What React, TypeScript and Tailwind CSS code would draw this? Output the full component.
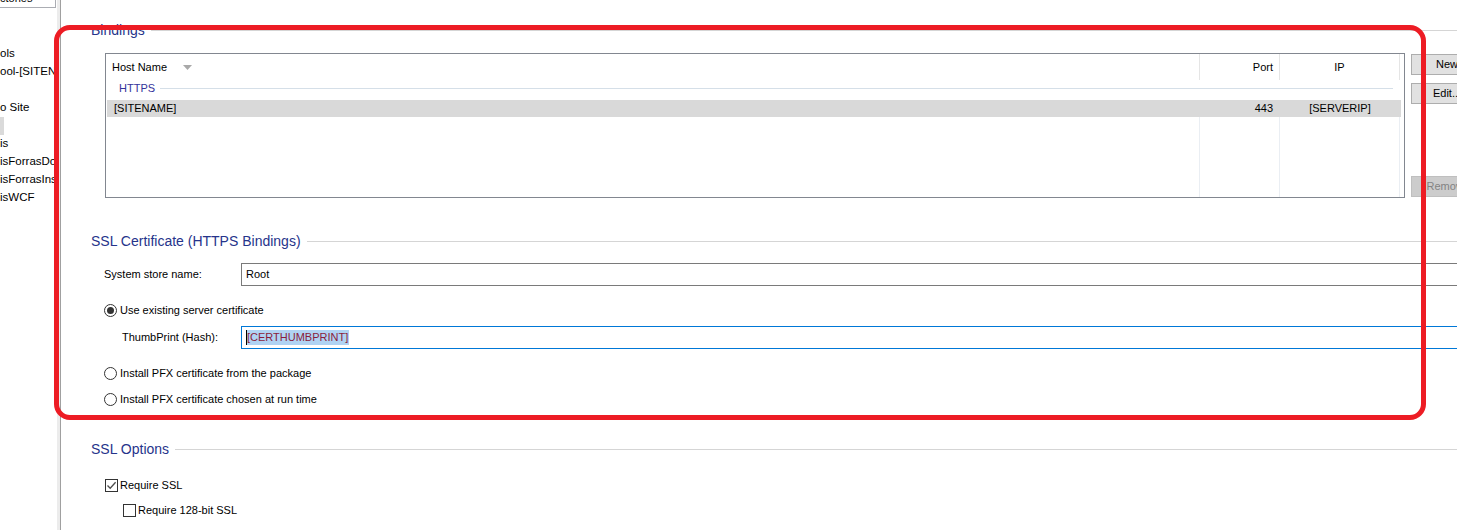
import React from "react";

const FONT = { fontFamily: '"Liberation Sans", Arial, sans-serif' };

function Heading({ text }: { text: string }) {
  return (
    <div className="flex items-center h-[18px] pl-[30px]">
      <span className="text-[14px] leading-[18px] text-[#26348b] whitespace-nowrap">{text}</span>
      <div className="flex-1 h-px bg-[#d5d5d5] ml-[6px]" />
    </div>
  );
}

function Radio({ checked, label }: { checked?: boolean; label: string }) {
  return (
    <div className="flex items-center h-[16px] ml-[43px]">
      <div className="w-[13px] h-[13px] rounded-full border border-[#333333] bg-white flex items-center justify-center shrink-0">
        {checked && <div className="w-[7px] h-[7px] rounded-full bg-[#333333]" />}
      </div>
      <span className="ml-[3px] text-[11px] whitespace-nowrap">{label}</span>
    </div>
  );
}

function Check({ checked, label, indent }: { checked?: boolean; label: string; indent: string }) {
  return (
    <div className={`flex items-center h-[16px] ${indent}`}>
      <div className="w-[13px] h-[13px] border border-[#333333] bg-white flex items-center justify-center shrink-0">
        {checked && (
          <svg width="11" height="11" viewBox="0 0 11 11">
            <path d="M1.5 5.5 L4.2 8.3 L9.6 2.2" fill="none" stroke="#4d4d4d" strokeWidth="1.3" />
          </svg>
        )}
      </div>
      <span className="ml-[2px] text-[11px] whitespace-nowrap">{label}</span>
    </div>
  );
}

export default function App() {
  const tree = ["ols", "ool-[SITENAME]", "", "o Site", "", "is", "isForrasDocs", "isForrasInstall", "isWCF"];
  return (
    <div className="w-[1457px] h-[530px] bg-white relative overflow-hidden flex text-black" style={FONT}>
      {/* Sidebar */}
      <div className="w-[57px] shrink-0 overflow-hidden flex flex-col">
        <div className="w-[56px] h-[8px] border-r border-b border-[#abadb3] overflow-hidden">
          <div className="text-[11px] leading-[14px] -mt-[9px] whitespace-nowrap">ctones</div>
        </div>
        <div className="mt-[37px] flex flex-col">
          {tree.map((t, i) => (
            <div key={i} className="h-[18px] flex items-center text-[11.5px] whitespace-nowrap relative">
              {i === 4 ? <div className="w-[4px] h-[18px] bg-[#dadada]" /> : <span>{t}</span>}
            </div>
          ))}
        </div>
      </div>
      <div className="w-[3px] shrink-0 bg-[#ececec]" />
      <div className="w-px shrink-0 bg-[#a0a0a0]" />

      {/* Main */}
      <div className="flex-1 min-w-0 flex flex-col pt-[21px]">
        <Heading text="Bindings" />
        <div className="flex mt-[14px] ml-[44px]">
          <div className="w-[1300px] h-[145px] shrink-0 border border-[#828790] flex flex-col text-[11px]">
            <div className="flex h-[26px]">
              <div className="w-[1094px] border-r border-[#e5e5e5] flex items-center pl-[6px]">
                <span>Host Name</span>
                <svg className="ml-[16px]" width="9" height="5" viewBox="0 0 9 5">
                  <path d="M0 0 L9 0 L4.5 5 Z" fill="#a9a9a9" />
                </svg>
              </div>
              <div className="w-[80px] border-r border-[#e5e5e5] flex items-center justify-end pr-[6px]">Port</div>
              <div className="w-[120px] border-r border-[#e5e5e5] flex items-center justify-center">IP</div>
              <div className="flex-1" />
            </div>
            <div className="h-[20px] flex items-start">
              <div className="h-[16px] flex items-center w-full pl-[13px] pr-[11px]">
                <span className="text-[#33339b] text-[11px]">HTTPS</span>
                <div className="flex-1 h-px bg-[#d5dfe8] ml-[5px]" />
              </div>
            </div>
            <div className="flex h-[17px]">
              <div className="w-[1294px] ml-px bg-[#d9d9d9] flex">
                <div className="w-[1093px] flex items-center pl-[7px]">[SITENAME]</div>
                <div className="w-[80px] flex items-center justify-end pr-[7px]">443</div>
                <div className="w-[120px] flex items-center justify-center">[SERVERIP]</div>
              </div>
            </div>
            <div className="flex flex-1">
              <div className="w-[1094px] border-r border-[#eaeef3]" />
              <div className="w-[80px] border-r border-[#eaeef3]" />
              <div className="w-[120px] border-r border-[#eaeef3]" />
              <div className="flex-1" />
            </div>
          </div>
          <div className="w-[72px] shrink-0 ml-[6px] h-[145px] flex flex-col py-px text-[11px]">
            <div className="h-[21px] bg-[#e1e1e1] border border-[#adadad] flex items-center justify-center">New</div>
            <div className="h-[21px] mt-[8px] bg-[#e1e1e1] border border-[#adadad] flex items-center justify-center">Edit...</div>
            <div className="flex-1" />
            <div className="h-[21px] bg-[#cccccc] border border-[#bfbfbf] text-[#838383] flex items-center justify-center">Remove</div>
          </div>
        </div>

        <div className="mt-[34px]">
          <Heading text="SSL Certificate (HTTPS Bindings)" />
        </div>
        <div className="flex items-center mt-[13px] ml-[43px] text-[11px]">
          <span className="w-[137px] shrink-0 whitespace-nowrap">System store name:</span>
          <div className="w-[1240px] shrink-0 h-[23px] border border-[#7a7a7a] flex items-center pl-[4px] pb-[1px]">Root</div>
        </div>
        <div className="mt-[16px]">
          <Radio checked label="Use existing server certificate" />
        </div>
        <div className="flex items-center mt-[8px] ml-[61px] text-[11px]">
          <span className="w-[119px] shrink-0 whitespace-nowrap">ThumbPrint (Hash):</span>
          <div className="w-[1240px] shrink-0 h-[23px] border border-[#0078d7] flex items-center pl-[4px]">
            <div className="w-px h-[15px] bg-black" />
            <span className="bg-[#b0d3f3] text-[#8a1c3b] h-[15px] leading-[15px] pr-[1px]">[CERTHUMBPRINT]</span>
          </div>
        </div>
        <div className="mt-[16px]">
          <Radio label="Install PFX certificate from the package" />
        </div>
        <div className="mt-[10px]">
          <Radio label="Install PFX certificate chosen at run time" />
        </div>

        <div className="mt-[33px]">
          <Heading text="SSL Options" />
        </div>
        <div className="mt-[19px]">
          <Check checked label="Require SSL" indent="ml-[44px]" />
        </div>
        <div className="mt-[9px]">
          <Check label="Require 128-bit SSL" indent="ml-[62px]" />
        </div>
      </div>

      {/* Red annotation */}
      <div className="absolute left-[54px] top-[25px] w-[1372px] h-[395px] border-[5px] border-[#ed1c24] rounded-[16px] pointer-events-none" />
    </div>
  );
}
